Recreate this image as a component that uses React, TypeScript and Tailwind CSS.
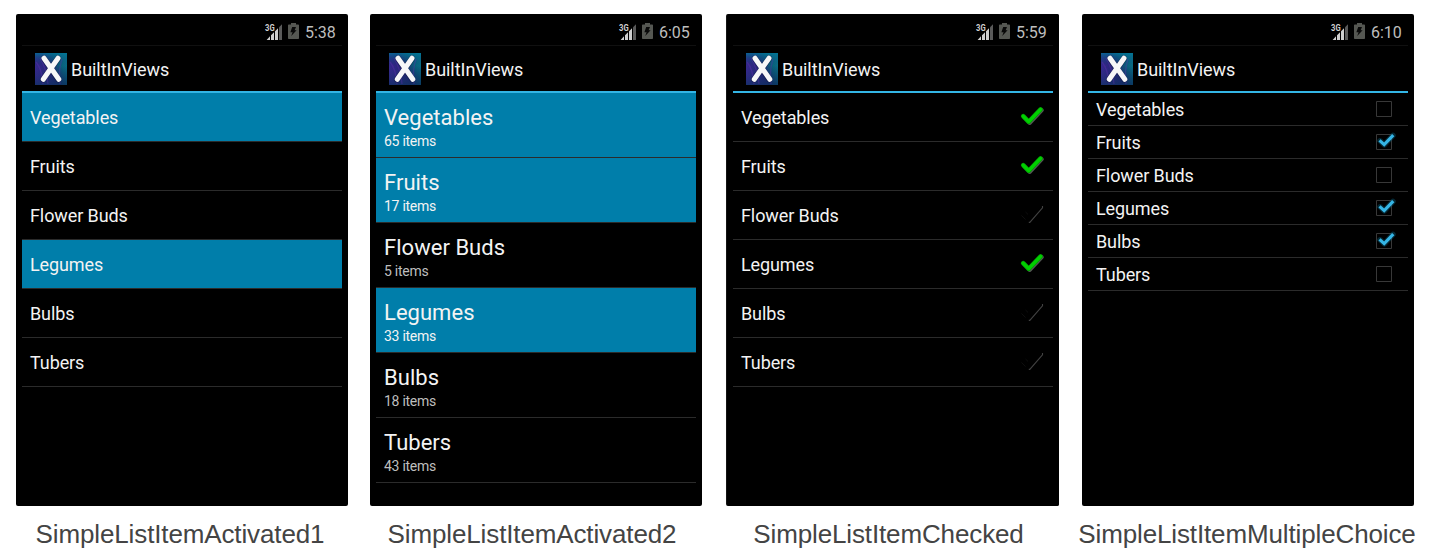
import type { ReactNode } from "react";

function Signal() {
  return (
    <svg width="18" height="17" viewBox="0 0 18 17" className="shrink-0 overflow-visible">
      <path d="M1.6 17L5 13.2V17ZM6 17V12.2L9 9.2V17ZM10 17V8.2L13 5.2V17Z" fill="#cfcfcf" />
      <path d="M14 17V4.2L17 1.2V17Z" fill="#5a5a5a" />
      <text x="0" y="7.9" fontSize="9" fontWeight="700" fontFamily="Roboto, sans-serif" textLength="9.6" lengthAdjust="spacingAndGlyphs" fill="#d0d0d0" stroke="#000" strokeWidth="1.4" paintOrder="stroke">3G</text>
    </svg>
  );
}

function Battery() {
  return (
    <svg width="11" height="16" viewBox="0 0 11 16" className="shrink-0">
      <path d="M3 0H8V1.5H10.2Q11 1.5 11 2.3V15.2Q11 16 10.2 16H.8Q0 16 0 15.2V2.3Q0 1.5.8 1.5H3Z" fill="#555752" />
      <path d="M4.2 4H8L6.6 7.2H8.6L3.2 13L4.6 9.2H2.4Z" fill="#080808" />
    </svg>
  );
}

function Logo() {
  return (
    <svg width="32" height="32" viewBox="0 0 32 32" className="shrink-0">
      <defs>
        <linearGradient id="logoBase" x1="0" y1="0.7" x2="1" y2="0.2">
          <stop offset="0" stopColor="#41299b" />
          <stop offset="0.45" stopColor="#282578" />
          <stop offset="0.75" stopColor="#07647b" />
          <stop offset="1" stopColor="#087d8e" />
        </linearGradient>
        <linearGradient id="logoShade" x1="0" y1="0" x2="0" y2="1">
          <stop offset="0" stopColor="#007397" stopOpacity="0.75" />
          <stop offset="0.4" stopColor="#162866" stopOpacity="0.1" />
          <stop offset="1" stopColor="#073158" stopOpacity="0.7" />
        </linearGradient>
      </defs>
      <path d="M0 0H32V32H0Z" fill="url(#logoBase)" />
      <path d="M0 0H32V32H0Z" fill="url(#logoShade)" />
      <path d="M1 9Q7 16 8 31M5 5Q12 17 13 31M27 6Q23 18 25 31" fill="none" stroke="#6431af" strokeWidth="1.3" opacity="0.35" />
      <path d="M9 5.5L23.5 26.5M23 5.5L8 26.5" fill="none" stroke="#101641" strokeWidth="6" strokeLinecap="round" opacity="0.6" />
      <path d="M9 5.2L23.8 26.3M23 5.2L8.3 26.3" fill="none" stroke="#f7f7f8" strokeWidth="5" strokeLinecap="round" />
    </svg>
  );
}

function CheckMark({ on }: { on: boolean }) {
  return (
    <svg width="32" height="32" viewBox="0 0 32 32" className="shrink-0">
      {on ? (
        <>
          <path d="M8.2 16.2L13.6 22L25.8 9.2" fill="none" stroke="#555" strokeWidth="4" strokeLinecap="round" strokeLinejoin="round" />
          <path d="M7.2 15.2L12.7 20.8L24.6 8.4" fill="none" stroke="#009d00" strokeWidth="4.5" strokeLinecap="round" strokeLinejoin="round" />
          <path d="M7.2 15.2L12.7 20.6L24.6 8.4" fill="none" stroke="#00d000" strokeWidth="3.3" strokeLinecap="round" strokeLinejoin="round" />
        </>
      ) : (
        <>
          <path d="M12.8 23.4H13.8L26.5 8.9V6.9" fill="none" stroke="#424242" strokeWidth="1.1" />
          <path d="M9.5 13L12.1 15.5M5.5 16.5L9.5 20.5" fill="none" stroke="#121212" strokeWidth="0.8" />
        </>
      )}
    </svg>
  );
}

function CheckBox({ on }: { on: boolean }) {
  return (
    <svg width="24" height="24" viewBox="0 0 24 24" className="mr-3 shrink-0">
      <path d="M4.5 4.5H19.5V19.5H4.5Z" fill="none" stroke="#383838" />
      {on && (
        <>
          <path d="M8 10.8L12.3 14.8L21 5.4" fill="none" stroke="#0b6382" strokeWidth="5.5" strokeLinejoin="round" strokeLinecap="round" opacity="0.4" />
          <path d="M7.5 10.3L12.2 14.6L21.3 5.2" fill="none" stroke="#35b5e5" strokeWidth="3.1" />
        </>
      )}
    </svg>
  );
}

const names = ["Vegetables", "Fruits", "Flower Buds", "Legumes", "Bulbs", "Tubers"];
const counts = [65, 17, 5, 33, 18, 43];

function Phone({ time, children }: { time: string; children: ReactNode }) {
  return (
    <section className="h-[492px] w-[332px] shrink-0 rounded-[2px] bg-black px-1.5 font-[Roboto,sans-serif]">
      <div className="flex h-8 items-center justify-end border-b border-[#101010] pr-1.5 pt-1">
        <Signal />
        <div className="ml-[5px] mr-1.5 -mt-px"><Battery /></div>
        <span className="w-[31px] whitespace-nowrap pt-0.5 text-base leading-5 text-[#bebebe]">{time}</span>
      </div>
      <header className="flex h-[47px] items-center border-b-2 border-[#33b5e5] pl-[13px] pt-px">
        <Logo />
        <h1 className="ml-1 pt-0.5 text-[18px] leading-6 tracking-[-0.05px] text-[#f3f3f3]">BuiltInViews</h1>
      </header>
      <ul>{children}</ul>
    </section>
  );
}

function Caption({ children }: { children: string }) {
  return <p className="mt-[13px] whitespace-nowrap text-center font-['Liberation_Sans',sans-serif] text-[26px] leading-[30px] tracking-[-0.13px] text-[#444]">{children}</p>;
}

export default function App() {
  return (
    <main className="flex h-[554px] w-[1431px] overflow-hidden bg-white pl-4 pt-3.5">
      <div className="w-[332px] shrink-0">
        <Phone time="5:38">
          {names.map((name, i) => (
            <li key={name} className={`flex h-[49px] items-center border-b border-[#2b2b2b] px-2 text-[18px] tracking-[-0.1px] text-[#f3f3f3] ${i === 0 || i === 3 ? "bg-[#007eaa]" : ""}`}>{name}</li>
          ))}
        </Phone>
        <div className="-ml-1"><Caption>SimpleListItemActivated1</Caption></div>
      </div>
      <div className="ml-[22px] w-[332px] shrink-0">
        <Phone time="6:05">
          {names.map((name, i) => {
            const active = i === 0 || i === 1 || i === 3;
            return (
              <li key={name} className={`h-[65px] border-b border-[#2b2b2b] px-2 pt-[9px] ${active ? "bg-[#007eaa]" : ""}`}>
                <div className="text-[22px] leading-8 tracking-[0.03px] text-[#f3f3f3]">{name}</div>
                <div className={`-mt-px text-sm leading-4 tracking-[-0.27px] ${active ? "text-[#f3f3f3]" : "text-[#bebebe]"}`}>{counts[i]} items</div>
              </li>
            );
          })}
        </Phone>
        <div className="-ml-2"><Caption>SimpleListItemActivated2</Caption></div>
      </div>
      <div className="ml-6 w-[333px] shrink-0">
        <div className="rounded-[2px] bg-[#151515] pl-px">
          <Phone time="5:59">
            {names.map((name, i) => (
              <li key={name} className="flex h-[49px] items-center justify-between border-b border-[#2b2b2b] pl-2 pr-[5px] text-[18px] tracking-[-0.1px] text-[#f3f3f3]">
                {name}
                <CheckMark on={i === 0 || i === 1 || i === 3} />
              </li>
            ))}
          </Phone>
        </div>
        <div className="-ml-2"><Caption>SimpleListItemChecked</Caption></div>
      </div>
      <div className="ml-[23px] w-[332px] shrink-0">
        <Phone time="6:10">
          {names.map((name, i) => (
            <li key={name} className="flex h-[33px] items-center justify-between border-b border-[#2b2b2b] pl-2 text-[18px] tracking-[-0.1px] text-[#f3f3f3]">
              {name}
              <CheckBox on={i === 1 || i === 3 || i === 4} />
            </li>
          ))}
        </Phone>
        <div className="-ml-3.5 -mr-3"><Caption>SimpleListItemMultipleChoice</Caption></div>
      </div>
    </main>
  );
}
